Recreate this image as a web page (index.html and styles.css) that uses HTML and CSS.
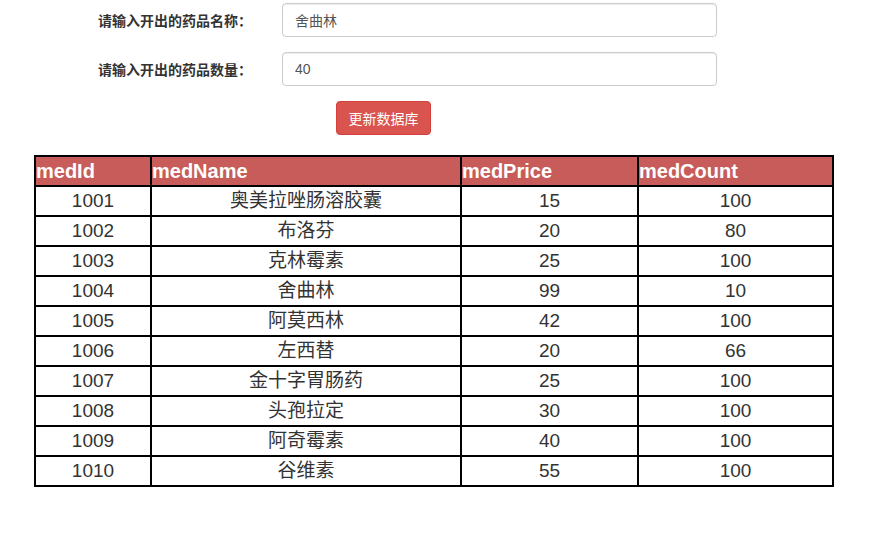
FILE: index.html
```html
<!DOCTYPE html>
<html lang="en">
<head>
    <meta charset="UTF-8">
    <title>药品出库</title>
    <link rel="stylesheet" href="styles.css">
</head>
<body>
    <form class="med-form">
        <div class="form-row">
            <label class="form-label">请输入开出的药品名称：</label>
            <input class="form-input" type="text" value="舍曲林">
        </div>
        <div class="form-row">
            <label class="form-label">请输入开出的药品数量：</label>
            <input class="form-input" type="text" value="40">
        </div>
        <div class="form-actions">
            <button type="button" class="btn-danger">更新数据库</button>
        </div>
    </form>

    <table class="med-table">
        <colgroup>
            <col class="col-id">
            <col class="col-name">
            <col class="col-price">
            <col class="col-count">
        </colgroup>
        <thead>
            <tr>
                <th>medId</th>
                <th>medName</th>
                <th>medPrice</th>
                <th>medCount</th>
            </tr>
        </thead>
        <tbody>
            <tr><td>1001</td><td>奥美拉唑肠溶胶囊</td><td>15</td><td>100</td></tr>
            <tr><td>1002</td><td>布洛芬</td><td>20</td><td>80</td></tr>
            <tr><td>1003</td><td>克林霉素</td><td>25</td><td>100</td></tr>
            <tr><td>1004</td><td>舍曲林</td><td>99</td><td>10</td></tr>
            <tr><td>1005</td><td>阿莫西林</td><td>42</td><td>100</td></tr>
            <tr><td>1006</td><td>左西替</td><td>20</td><td>66</td></tr>
            <tr><td>1007</td><td>金十字胃肠药</td><td>25</td><td>100</td></tr>
            <tr><td>1008</td><td>头孢拉定</td><td>30</td><td>100</td></tr>
            <tr><td>1009</td><td>阿奇霉素</td><td>40</td><td>100</td></tr>
            <tr><td>1010</td><td>谷维素</td><td>55</td><td>100</td></tr>
        </tbody>
    </table>
</body>
</html>
```

FILE: styles.css
```css
body {
    margin: 0;
    font-family: "Liberation Sans", Arial, "Noto Sans CJK SC", sans-serif;
    color: #333;
}
.med-form {
    padding-top: 3px;
}
.form-row {
    display: flex;
    align-items: center;
    margin-bottom: 15px;
}
.form-label {
    width: 252px;
    margin-right: 30px;
    text-align: right;
    font-size: 14px;
    font-weight: bold;
}
.form-input {
    box-sizing: border-box;
    width: 435px;
    height: 34px;
    padding: 6px 12px;
    border: 1px solid #ccc;
    border-radius: 4px;
    box-shadow: inset 0 1px 1px rgba(0, 0, 0, 0.075);
    font-family: "Liberation Sans", Arial, "Noto Sans CJK SC", sans-serif;
    font-size: 14px;
    color: #555;
}
.form-actions {
    padding-left: 336px;
}
.btn-danger {
    box-sizing: border-box;
    width: 95px;
    height: 34px;
    background: #d9534f;
    border: 1px solid #d43f3a;
    border-radius: 4px;
    color: #fff;
    font-family: "Liberation Sans", Arial, "Noto Sans CJK SC", sans-serif;
    font-size: 14px;
    cursor: pointer;
}
.med-table {
    margin: 20px 0 0 34px;
    width: 798px;
    border-collapse: collapse;
    table-layout: fixed;
    border: 2px solid #000;
    font-size: 19px;
}
.col-id { width: 116px; }
.col-name { width: 310px; }
.col-price { width: 177px; }
.col-count { width: 195px; }
.med-table th,
.med-table td {
    border: 2px solid #000;
    padding: 0;
    height: 28px;
    line-height: 28px;
}
.med-table th {
    background: #c75c5a;
    color: #fff;
    text-align: left;
    font-size: 20px;
    font-weight: bold;
}
.med-table td {
    text-align: center;
}
```
